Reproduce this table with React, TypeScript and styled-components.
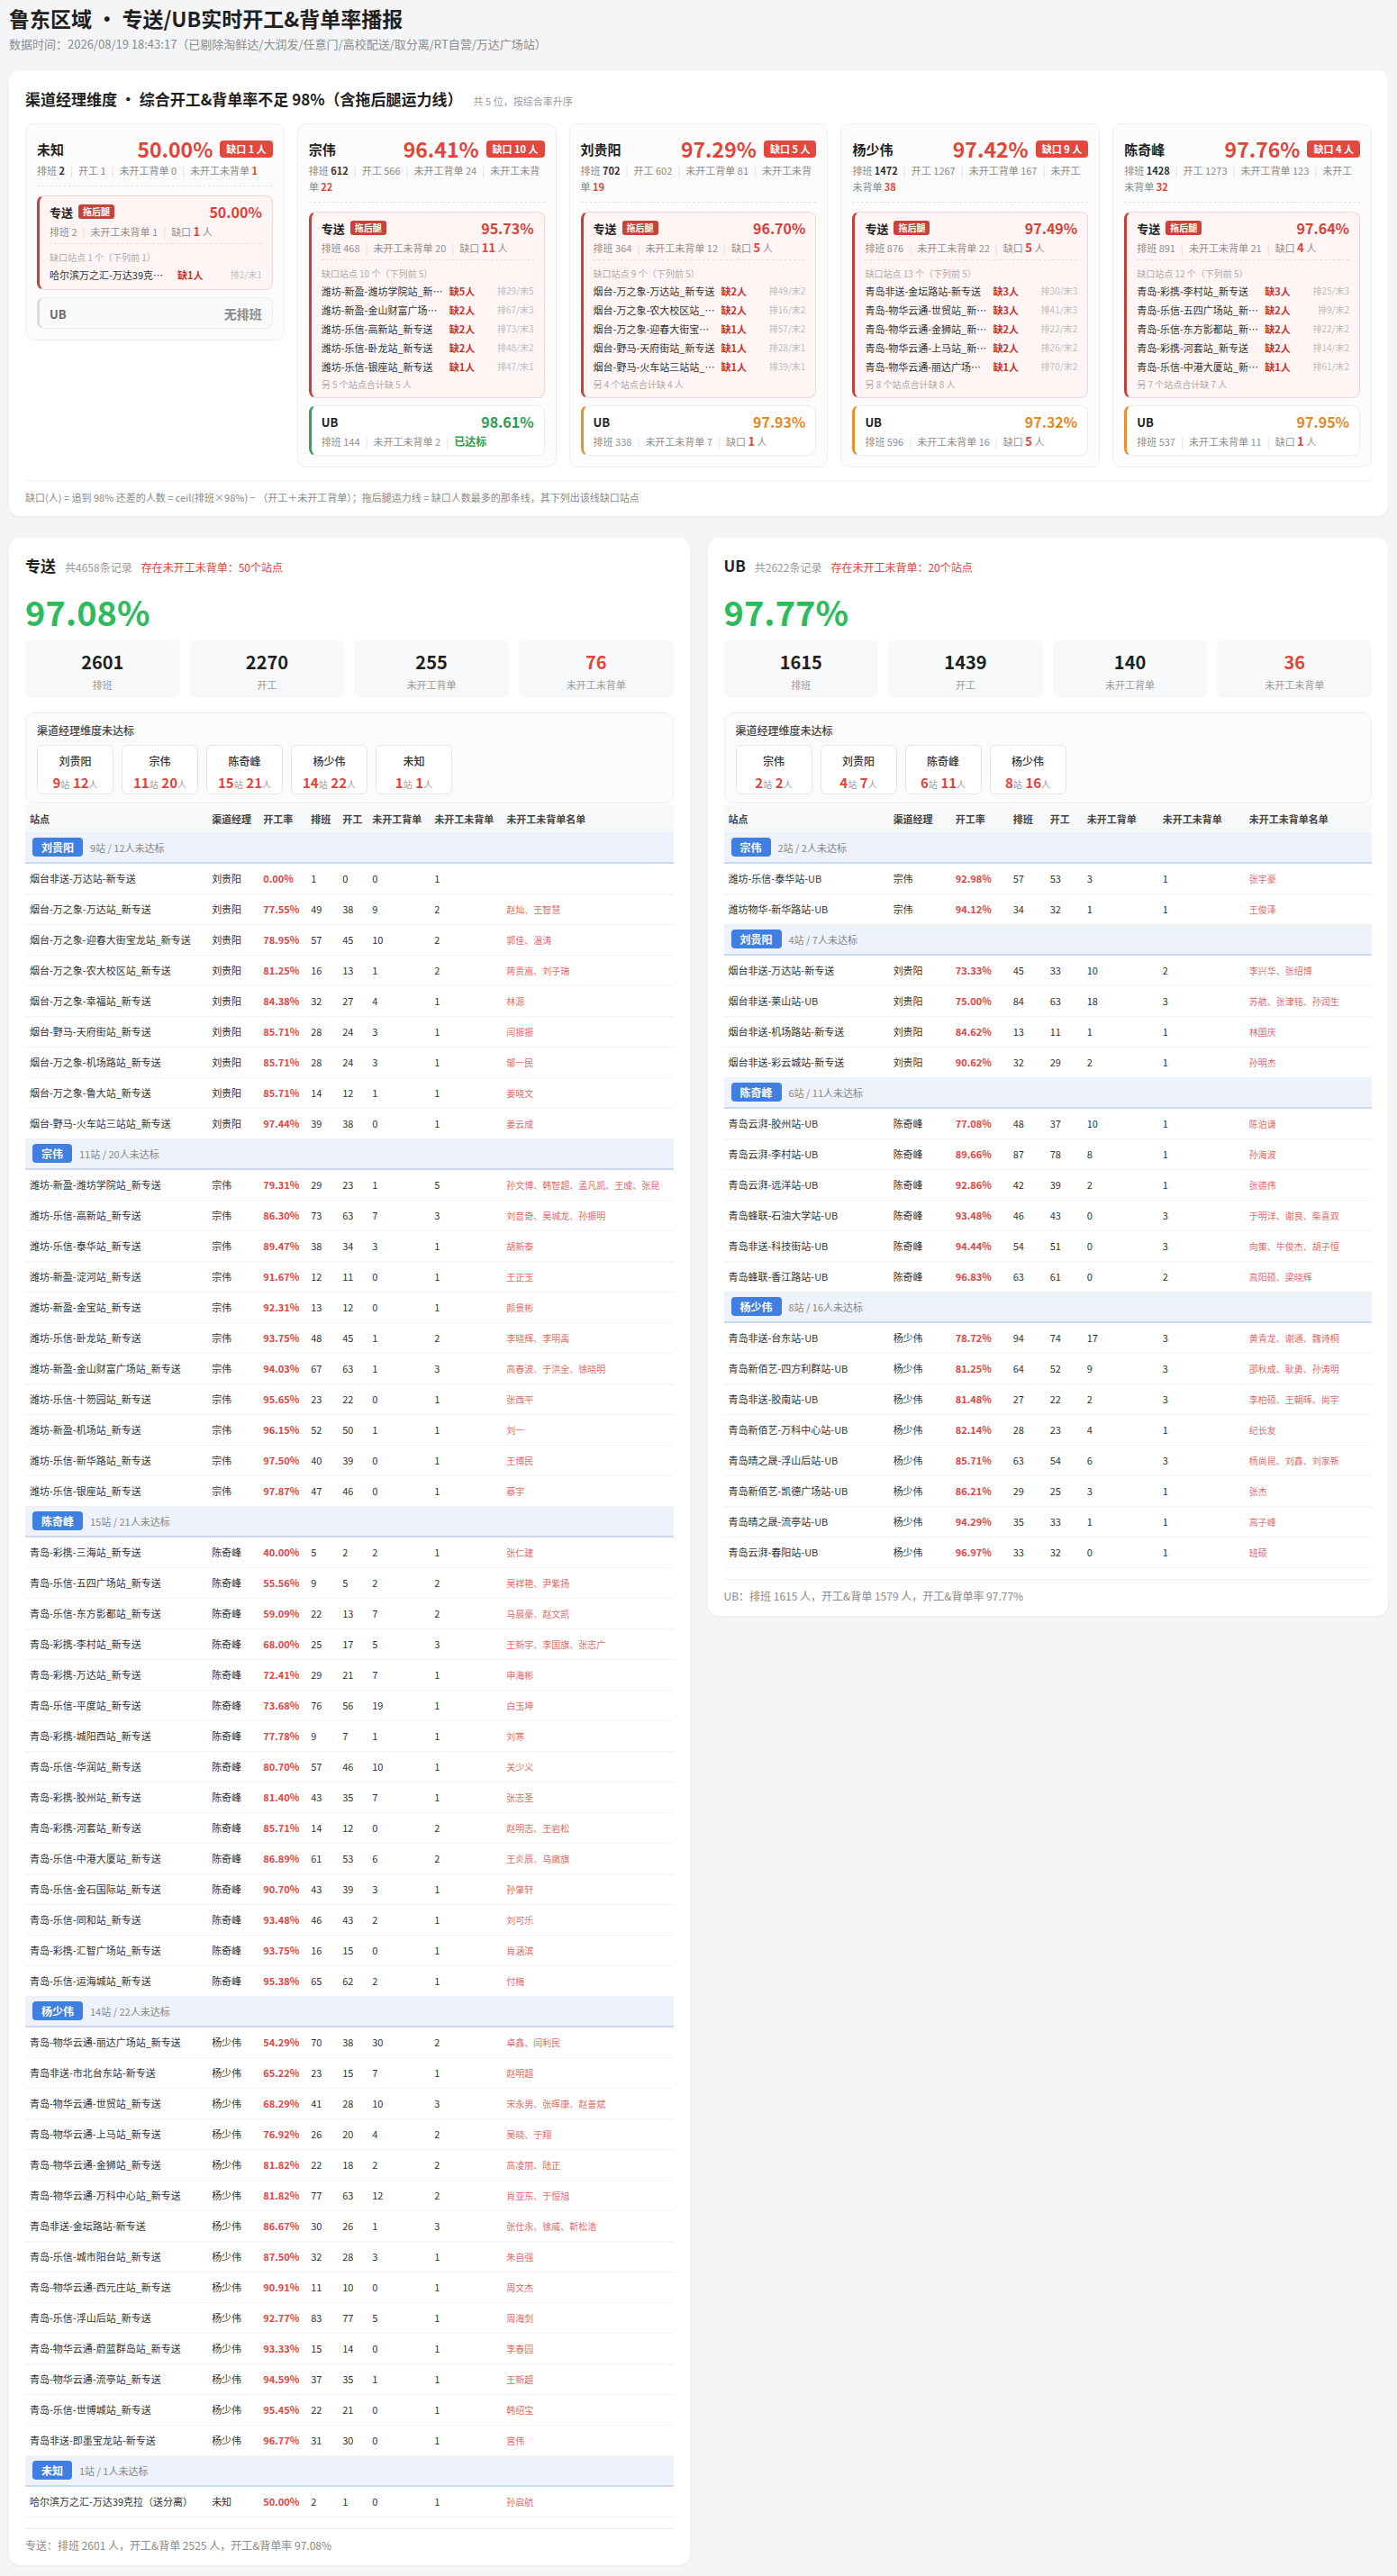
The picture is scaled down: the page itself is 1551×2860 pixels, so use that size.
import React from "react";
import styled, { createGlobalStyle, css } from "styled-components";

type Tone = "drag" | "ok" | "warn" | "none";
type Spot = [string, number, number, number];
type ZsLine = { rate: string; pai: number; wei: number; gap: number; count: number; shown: number; spots: Spot[]; rest?: [number, number] };
type UbLine = { rate: string; pai: number; wei: number; gap: number } | null;
type Manager = { name: string; rate: string; gap: number; pai: number; kai: number; bei: number; wei: number; zs: ZsLine; ub: UbLine };
type Row = [string, string, number, number, number, number, string];
type Group = { mgr: string; summary: string; rows: Row[] };

const GlobalStyle = createGlobalStyle`
  * { box-sizing: border-box; }
  body {
    margin: 0;
    background: #f4f5f7;
    font-family: "Noto Sans CJK SC", "Noto Sans", sans-serif;
    color: #222;
  }
`;

// station names are shown the way the board truncates them
const managers: Manager[] = [
  {
    name: "未知", rate: "50.00%", gap: 1, pai: 2, kai: 1, bei: 0, wei: 1,
    zs: { rate: "50.00%", pai: 2, wei: 1, gap: 1, count: 1, shown: 1, spots: [["哈尔滨万之汇-万达39克…", 1, 2, 1]] },
    ub: null,
  },
  {
    name: "宗伟", rate: "96.41%", gap: 10, pai: 612, kai: 566, bei: 24, wei: 22,
    zs: {
      rate: "95.73%", pai: 468, wei: 20, gap: 11, count: 10, shown: 5, rest: [5, 5],
      spots: [
        ["潍坊-新盈-潍坊学院站_新…", 5, 29, 5],
        ["潍坊-新盈-金山财富广场…", 2, 67, 3],
        ["潍坊-乐信-高新站_新专送", 2, 73, 3],
        ["潍坊-乐信-卧龙站_新专送", 2, 48, 2],
        ["潍坊-乐信-银座站_新专送", 1, 47, 1],
      ],
    },
    ub: { rate: "98.61%", pai: 144, wei: 2, gap: 0 },
  },
  {
    name: "刘贵阳", rate: "97.29%", gap: 5, pai: 702, kai: 602, bei: 81, wei: 19,
    zs: {
      rate: "96.70%", pai: 364, wei: 12, gap: 5, count: 9, shown: 5, rest: [4, 4],
      spots: [
        ["烟台-万之象-万达站_新专送", 2, 49, 2],
        ["烟台-万之象-农大校区站_…", 2, 16, 2],
        ["烟台-万之象-迎春大街宝…", 1, 57, 2],
        ["烟台-野马-天府街站_新专送", 1, 28, 1],
        ["烟台-野马-火车站三站站_…", 1, 39, 1],
      ],
    },
    ub: { rate: "97.93%", pai: 338, wei: 7, gap: 1 },
  },
  {
    name: "杨少伟", rate: "97.42%", gap: 9, pai: 1472, kai: 1267, bei: 167, wei: 38,
    zs: {
      rate: "97.49%", pai: 876, wei: 22, gap: 5, count: 13, shown: 5, rest: [8, 8],
      spots: [
        ["青岛非送-金坛路站-新专送", 3, 30, 3],
        ["青岛-物华云通-世贸站_新…", 3, 41, 3],
        ["青岛-物华云通-金狮站_新…", 2, 22, 2],
        ["青岛-物华云通-上马站_新…", 2, 26, 2],
        ["青岛-物华云通-丽达广场…", 1, 70, 2],
      ],
    },
    ub: { rate: "97.32%", pai: 596, wei: 16, gap: 5 },
  },
  {
    name: "陈奇峰", rate: "97.76%", gap: 4, pai: 1428, kai: 1273, bei: 123, wei: 32,
    zs: {
      rate: "97.64%", pai: 891, wei: 21, gap: 4, count: 12, shown: 5, rest: [7, 7],
      spots: [
        ["青岛-彩携-李村站_新专送", 3, 25, 3],
        ["青岛-乐信-五四广场站_新…", 2, 9, 2],
        ["青岛-乐信-东方影都站_新…", 2, 22, 2],
        ["青岛-彩携-河套站_新专送", 2, 14, 2],
        ["青岛-乐信-中港大厦站_新…", 1, 61, 2],
      ],
    },
    ub: { rate: "97.95%", pai: 537, wei: 11, gap: 1 },
  },
];

const zsGroups: Group[] = [
  {
    mgr: "刘贵阳", summary: "9站 / 12人未达标",
    rows: [
      ["烟台非送-万达站-新专送", "0.00%", 1, 0, 0, 1, ""],
      ["烟台-万之象-万达站_新专送", "77.55%", 49, 38, 9, 2, "赵灿、王智慧"],
      ["烟台-万之象-迎春大街宝龙站_新专送", "78.95%", 57, 45, 10, 2, "郭佳、温涛"],
      ["烟台-万之象-农大校区站_新专送", "81.25%", 16, 13, 1, 2, "蒋贵嵩、刘子瑞"],
      ["烟台-万之象-幸福站_新专送", "84.38%", 32, 27, 4, 1, "林源"],
      ["烟台-野马-天府街站_新专送", "85.71%", 28, 24, 3, 1, "闫振振"],
      ["烟台-万之象-机场路站_新专送", "85.71%", 28, 24, 3, 1, "邹一民"],
      ["烟台-万之象-鲁大站_新专送", "85.71%", 14, 12, 1, 1, "姜晓文"],
      ["烟台-野马-火车站三站站_新专送", "97.44%", 39, 38, 0, 1, "姜云成"],
    ],
  },
  {
    mgr: "宗伟", summary: "11站 / 20人未达标",
    rows: [
      ["潍坊-新盈-潍坊学院站_新专送", "79.31%", 29, 23, 1, 5, "孙文博、韩智超、孟凡凯、王成、张昆"],
      ["潍坊-乐信-高新站_新专送", "86.30%", 73, 63, 7, 3, "刘音奇、吴城龙、孙振明"],
      ["潍坊-乐信-泰华站_新专送", "89.47%", 38, 34, 3, 1, "胡新泰"],
      ["潍坊-新盈-淀河站_新专送", "91.67%", 12, 11, 0, 1, "王正玉"],
      ["潍坊-新盈-金宝站_新专送", "92.31%", 13, 12, 0, 1, "颜景彬"],
      ["潍坊-乐信-卧龙站_新专送", "93.75%", 48, 45, 1, 2, "李晓辉、李明禹"],
      ["潍坊-新盈-金山财富广场站_新专送", "94.03%", 67, 63, 1, 3, "高春波、于洪全、徐晓明"],
      ["潍坊-乐信-十笏园站_新专送", "95.65%", 23, 22, 0, 1, "张西平"],
      ["潍坊-新盈-机场站_新专送", "96.15%", 52, 50, 1, 1, "刘一"],
      ["潍坊-乐信-新华路站_新专送", "97.50%", 40, 39, 0, 1, "王博民"],
      ["潍坊-乐信-银座站_新专送", "97.87%", 47, 46, 0, 1, "蔡宇"],
    ],
  },
  {
    mgr: "陈奇峰", summary: "15站 / 21人未达标",
    rows: [
      ["青岛-彩携-三海站_新专送", "40.00%", 5, 2, 2, 1, "张仁建"],
      ["青岛-乐信-五四广场站_新专送", "55.56%", 9, 5, 2, 2, "吴祥艳、尹紫扬"],
      ["青岛-乐信-东方影都站_新专送", "59.09%", 22, 13, 7, 2, "马晨豪、赵文凯"],
      ["青岛-彩携-李村站_新专送", "68.00%", 25, 17, 5, 3, "王新宇、李国旗、张志广"],
      ["青岛-彩携-万达站_新专送", "72.41%", 29, 21, 7, 1, "申海彬"],
      ["青岛-乐信-平度站_新专送", "73.68%", 76, 56, 19, 1, "白玉坤"],
      ["青岛-彩携-城阳西站_新专送", "77.78%", 9, 7, 1, 1, "刘寒"],
      ["青岛-乐信-华润站_新专送", "80.70%", 57, 46, 10, 1, "关少义"],
      ["青岛-彩携-胶州站_新专送", "81.40%", 43, 35, 7, 1, "张志圣"],
      ["青岛-彩携-河套站_新专送", "85.71%", 14, 12, 0, 2, "赵明志、王岩松"],
      ["青岛-乐信-中港大厦站_新专送", "86.89%", 61, 53, 6, 2, "王炎辰、乌嫩旗"],
      ["青岛-乐信-金石国际站_新专送", "90.70%", 43, 39, 3, 1, "孙肇轩"],
      ["青岛-乐信-同和站_新专送", "93.48%", 46, 43, 2, 1, "刘可乐"],
      ["青岛-彩携-汇智广场站_新专送", "93.75%", 16, 15, 0, 1, "肖涵滨"],
      ["青岛-乐信-运海城站_新专送", "95.38%", 65, 62, 2, 1, "付梅"],
    ],
  },
  {
    mgr: "杨少伟", summary: "14站 / 22人未达标",
    rows: [
      ["青岛-物华云通-丽达广场站_新专送", "54.29%", 70, 38, 30, 2, "卓鑫、闫利民"],
      ["青岛非送-市北台东站-新专送", "65.22%", 23, 15, 7, 1, "赵明超"],
      ["青岛-物华云通-世贸站_新专送", "68.29%", 41, 28, 10, 3, "宋永男、张晖康、赵善斌"],
      ["青岛-物华云通-上马站_新专送", "76.92%", 26, 20, 4, 2, "吴晓、于翔"],
      ["青岛-物华云通-金狮站_新专送", "81.82%", 22, 18, 2, 2, "高凌丽、陆正"],
      ["青岛-物华云通-万科中心站_新专送", "81.82%", 77, 63, 12, 2, "肖亚东、于恒旭"],
      ["青岛非送-金坛路站-新专送", "86.67%", 30, 26, 1, 3, "张仕永、徐威、靳松浩"],
      ["青岛-乐信-城市阳台站_新专送", "87.50%", 32, 28, 3, 1, "朱自强"],
      ["青岛-物华云通-西元庄站_新专送", "90.91%", 11, 10, 0, 1, "周文杰"],
      ["青岛-乐信-浮山后站_新专送", "92.77%", 83, 77, 5, 1, "周海剑"],
      ["青岛-物华云通-蔚蓝群岛站_新专送", "93.33%", 15, 14, 0, 1, "李春园"],
      ["青岛-物华云通-流亭站_新专送", "94.59%", 37, 35, 1, 1, "王新超"],
      ["青岛-乐信-世博城站_新专送", "95.45%", 22, 21, 0, 1, "韩绍宝"],
      ["青岛非送-即墨宝龙站-新专送", "96.77%", 31, 30, 0, 1, "宫伟"],
    ],
  },
  {
    mgr: "未知", summary: "1站 / 1人未达标",
    rows: [["哈尔滨万之汇-万达39克拉（送分离）", "50.00%", 2, 1, 0, 1, "孙启航"]],
  },
];

const ubGroups: Group[] = [
  {
    mgr: "宗伟", summary: "2站 / 2人未达标",
    rows: [
      ["潍坊-乐信-泰华站-UB", "92.98%", 57, 53, 3, 1, "张宇豪"],
      ["潍坊物华-新华路站-UB", "94.12%", 34, 32, 1, 1, "王俊泽"],
    ],
  },
  {
    mgr: "刘贵阳", summary: "4站 / 7人未达标",
    rows: [
      ["烟台非送-万达站-新专送", "73.33%", 45, 33, 10, 2, "李兴华、张绍博"],
      ["烟台非送-莱山站-UB", "75.00%", 84, 63, 18, 3, "苏航、张津铭、孙润生"],
      ["烟台非送-机场路站-新专送", "84.62%", 13, 11, 1, 1, "林国庆"],
      ["烟台非送-彩云城站-新专送", "90.62%", 32, 29, 2, 1, "孙明杰"],
    ],
  },
  {
    mgr: "陈奇峰", summary: "6站 / 11人未达标",
    rows: [
      ["青岛云湃-胶州站-UB", "77.08%", 48, 37, 10, 1, "陈泊谦"],
      ["青岛云湃-李村站-UB", "89.66%", 87, 78, 8, 1, "孙海波"],
      ["青岛云湃-远洋站-UB", "92.86%", 42, 39, 2, 1, "张德伟"],
      ["青岛蜂联-石油大学站-UB", "93.48%", 46, 43, 0, 3, "于明洋、谢良、柴喜双"],
      ["青岛非送-科技街站-UB", "94.44%", 54, 51, 0, 3, "向策、牛俊杰、胡子恒"],
      ["青岛蜂联-香江路站-UB", "96.83%", 63, 61, 0, 2, "高阳硕、梁晓辉"],
    ],
  },
  {
    mgr: "杨少伟", summary: "8站 / 16人未达标",
    rows: [
      ["青岛非送-台东站-UB", "78.72%", 94, 74, 17, 3, "黄青龙、谢通、魏诗桐"],
      ["青岛新佰艺-四方利群站-UB", "81.25%", 64, 52, 9, 3, "邵秋成、耿勇、孙涛明"],
      ["青岛非送-胶南站-UB", "81.48%", 27, 22, 2, 3, "李柏硕、王朝晖、尚宇"],
      ["青岛新佰艺-万科中心站-UB", "82.14%", 28, 23, 4, 1, "纪长友"],
      ["青岛晴之晟-浮山后站-UB", "85.71%", 63, 54, 6, 3, "杨尚昆、刘鑫、刘家新"],
      ["青岛新佰艺-凯德广场站-UB", "86.21%", 29, 25, 3, 1, "张杰"],
      ["青岛晴之晟-流亭站-UB", "94.29%", 35, 33, 1, 1, "高子峰"],
      ["青岛云湃-春阳站-UB", "96.97%", 33, 32, 0, 1, "班硕"],
    ],
  },
];

const RED = "#e0443a";

export default function App() {
  return (
    <>
      <GlobalStyle />
      <Page>
        <Title>鲁东区域 • 专送/UB实时开工&amp;背单率播报</Title>
        <Subtitle>数据时间：2026/08/19 18:43:17（已剔除淘鲜达/大润发/任意门/高校配送/取分离/RT自营/万达广场站）</Subtitle>

        <Panel>
          <PanelHead>
            <PanelTitle>渠道经理维度 • 综合开工&amp;背单率不足 98%（含拖后腿运力线）</PanelTitle>
            <PanelHint>共 5 位，按综合率升序</PanelHint>
          </PanelHead>
          <CardGrid>
            {managers.map((m) => (
              <ManagerCard key={m.name} m={m} />
            ))}
          </CardGrid>
          <Footnote>
            缺口(人) = 追到 98% 还差的人数 = ceil(排班×98%) − （开工＋未开工背单）；拖后腿运力线 = 缺口人数最多的那条线，其下列出该线缺口站点
          </Footnote>
        </Panel>

        <Columns>
          <DetailPanel
            name="专送"
            total="共4658条记录"
            alert="存在未开工未背单：50个站点"
            rate="97.08%"
            stats={[2601, 2270, 255, 76]}
            chips={[["刘贵阳", 9, 12], ["宗伟", 11, 20], ["陈奇峰", 15, 21], ["杨少伟", 14, 22], ["未知", 1, 1]]}
            cols={[202, 57, 53, 35, 33, 69, 80, 190]}
            groups={zsGroups}
            summary="专送：排班 2601 人，开工&背单 2525 人，开工&背单率 97.08%"
          />
          <DetailPanel
            name="UB"
            total="共2622条记录"
            alert="存在未开工未背单：20个站点"
            rate="97.77%"
            stats={[1615, 1439, 140, 36]}
            chips={[["宗伟", 2, 2], ["刘贵阳", 4, 7], ["陈奇峰", 6, 11], ["杨少伟", 8, 16]]}
            cols={[183, 69, 64, 41, 41, 84, 96, 141]}
            groups={ubGroups}
            summary="UB：排班 1615 人，开工&背单 1579 人，开工&背单率 97.77%"
          />
        </Columns>
      </Page>
    </>
  );
}

function Sep() {
  return <Bar>|</Bar>;
}

function ManagerCard({ m }: { m: Manager }) {
  const ub = m.ub;
  const ubTone: Tone = !ub ? "none" : ub.gap === 0 ? "ok" : "warn";
  return (
    <Card>
      <CardHead>
        <CardName>{m.name}</CardName>
        <CardRight>
          <CardRate>{m.rate}</CardRate>
          <GapBadge>缺口 {m.gap} 人</GapBadge>
        </CardRight>
      </CardHead>
      <CardStats>
        排班 <Strong>{m.pai}</Strong>
        <Sep />开工 {m.kai}
        <Sep />未开工背单 {m.bei}
        <Sep />未开工未背单 <Hot>{m.wei}</Hot>
      </CardStats>

      <LineBox $tone="drag">
        <LineHead>
          <LineName>
            专送<DragTag>拖后腿</DragTag>
          </LineName>
          <LineRate $tone="drag">{m.zs.rate}</LineRate>
        </LineHead>
        <LineStats $divided>
          排班 {m.zs.pai}
          <Sep />未开工未背单 {m.zs.wei}
          <Sep />缺口 <GapNum>{m.zs.gap}</GapNum> 人
        </LineStats>
        <SpotHint>
          缺口站点 {m.zs.count} 个（下列前 {m.zs.shown}）
        </SpotHint>
        {m.zs.spots.map((s) => (
          <SpotRow key={s[0]}>
            <SpotName>{s[0]}</SpotName>
            <SpotGap>缺{s[1]}人</SpotGap>
            <SpotMeta>
              排{s[2]}/末{s[3]}
            </SpotMeta>
          </SpotRow>
        ))}
        {m.zs.rest && (
          <SpotRest>
            另 {m.zs.rest[0]} 个站点合计缺 {m.zs.rest[1]} 人
          </SpotRest>
        )}
      </LineBox>

      <LineBox $tone={ubTone}>
        <LineHead>
          <LineName $muted={!ub}>UB</LineName>
          {ub ? <LineRate $tone={ubTone}>{ub.rate}</LineRate> : <NoShift>无排班</NoShift>}
        </LineHead>
        {ub && (
          <LineStats>
            排班 {ub.pai}
            <Sep />未开工未背单 {ub.wei}
            <Sep />
            {ub.gap === 0 ? (
              <Reached>已达标</Reached>
            ) : (
              <>
                缺口 <GapNum>{ub.gap}</GapNum> 人
              </>
            )}
          </LineStats>
        )}
      </LineBox>
    </Card>
  );
}

type DetailProps = {
  name: string;
  total: string;
  alert: string;
  rate: string;
  stats: number[];
  chips: [string, number, number][];
  cols: number[];
  groups: Group[];
  summary: string;
};

const statLabels = ["排班", "开工", "未开工背单", "未开工未背单"];
const heads = ["站点", "渠道经理", "开工率", "排班", "开工", "未开工背单", "未开工未背单", "未开工未背单名单"];

function DetailPanel(p: DetailProps) {
  return (
    <Section>
      <SectionHead>
        <SectionName>{p.name}</SectionName>
        <Muted>{p.total}</Muted>
        <Alert>{p.alert}</Alert>
      </SectionHead>
      <BigRate>{p.rate}</BigRate>
      <StatRow>
        {p.stats.map((v, i) => (
          <StatBox key={statLabels[i]}>
            <StatNum $red={i === 3}>{v}</StatNum>
            <StatLabel>{statLabels[i]}</StatLabel>
          </StatBox>
        ))}
      </StatRow>
      <MgrBox>
        <MgrTitle>渠道经理维度未达标</MgrTitle>
        <ChipRow>
          {p.chips.map(([n, s, r]) => (
            <MgrChip key={n}>
              <ChipName>{n}</ChipName>
              <ChipNums>
                <ChipNum>{s}</ChipNum>
                <ChipUnit>站</ChipUnit> <ChipNum>{r}</ChipNum>
                <ChipUnit>人</ChipUnit>
              </ChipNums>
            </MgrChip>
          ))}
        </ChipRow>
      </MgrBox>
      <Table>
        <colgroup>
          {p.cols.map((w, i) => (
            <col key={i} style={{ width: w }} />
          ))}
        </colgroup>
        <thead>
          <tr>
            {heads.map((h) => (
              <Th key={h}>{h}</Th>
            ))}
          </tr>
        </thead>
        <tbody>
          {p.groups.map((g) => (
            <React.Fragment key={g.mgr}>
              <tr>
                <GroupCell colSpan={8}>
                  <GroupTag>{g.mgr}</GroupTag>
                  <GroupText>{g.summary}</GroupText>
                </GroupCell>
              </tr>
              {g.rows.map((r) => (
                <tr key={r[0]}>
                  <Td>{r[0]}</Td>
                  <Td>{g.mgr}</Td>
                  <RateTd>{r[1]}</RateTd>
                  <Td>{r[2]}</Td>
                  <Td>{r[3]}</Td>
                  <Td>{r[4]}</Td>
                  <Td>{r[5]}</Td>
                  <NameTd>{r[6]}</NameTd>
                </tr>
              ))}
            </React.Fragment>
          ))}
        </tbody>
      </Table>
      <Summary>{p.summary}</Summary>
    </Section>
  );
}

/* ---------- page ---------- */

const Page = styled.div`
  padding: 6px 10px 11px;
`;

const Title = styled.h1`
  margin: 0;
  font-size: 23px;
  line-height: 28px;
  font-weight: 700;
  color: #1f1f1f;
`;

const Subtitle = styled.div`
  margin-top: 6px;
  font-size: 13px;
  line-height: 18px;
  color: #8c8c8c;
`;

const Panel = styled.div`
  margin-top: 20px;
  background: #fff;
  border-radius: 12px;
  box-shadow: 0 1px 3px rgba(0, 0, 0, 0.06);
  padding: 20px 18px 12px;
`;

const PanelHead = styled.div`
  display: flex;
  align-items: baseline;
  gap: 12px;
`;

const PanelTitle = styled.div`
  font-size: 17px;
  line-height: 24px;
  font-weight: 700;
  color: #1f1f1f;
`;

const PanelHint = styled.div`
  font-size: 11px;
  color: #9a9a9a;
`;

const CardGrid = styled.div`
  margin-top: 15px;
  display: grid;
  grid-template-columns: repeat(5, 1fr);
  gap: 14px;
  align-items: start;
`;

const Card = styled.div`
  background: #fcfcfc;
  border: 1px solid #eeeeee;
  border-radius: 10px;
  padding: 12px;
`;

const CardHead = styled.div`
  display: flex;
  align-items: center;
  justify-content: space-between;
  height: 30px;
`;

const CardName = styled.div`
  font-size: 15px;
  font-weight: 700;
  color: #1f1f1f;
`;

const CardRight = styled.div`
  display: flex;
  align-items: center;
  gap: 8px;
`;

const CardRate = styled.div`
  font-size: 23px;
  font-weight: 700;
  color: ${RED};
  line-height: 30px;
`;

const GapBadge = styled.span`
  display: inline-flex;
  align-items: center;
  height: 19px;
  padding: 0 7px;
  border-radius: 4px;
  background: #e2483e;
  color: #fff;
  font-size: 11px;
  font-weight: 700;
`;

const CardStats = styled.div`
  font-size: 11px;
  line-height: 18px;
  color: #8a8a8a;
  padding-bottom: 8px;
  border-bottom: 1px dashed #e4e4e4;
  margin-bottom: 10px;
`;

const Bar = styled.span`
  color: #dcdcdc;
  margin: 0 6px;
`;

const Strong = styled.b`
  color: #333;
  font-weight: 700;
`;

const Hot = styled.b`
  color: ${RED};
  font-weight: 700;
`;

const toneStyles: Record<Tone, ReturnType<typeof css>> = {
  drag: css`
    background: #fff5f5;
    border-color: #f3d5d5;
    border-left-color: #c6413a;
  `,
  ok: css`
    background: #fff;
    border-color: #ececec;
    border-left-color: #2ea65a;
  `,
  warn: css`
    background: #fff;
    border-color: #ececec;
    border-left-color: #e8912c;
  `,
  none: css`
    background: #fafafa;
    border-color: #ececec;
    border-left-color: #d9dcdf;
  `,
};

const LineBox = styled.div<{ $tone: Tone }>`
  border: 1px solid;
  border-left-width: 3px;
  border-radius: 8px;
  padding: 7px 11px 6px;
  ${(p) => toneStyles[p.$tone]}

  & + & {
    margin-top: 8px;
  }
`;

const LineHead = styled.div`
  display: flex;
  align-items: center;
  justify-content: space-between;
  height: 20px;
`;

const LineName = styled.div<{ $muted?: boolean }>`
  display: flex;
  align-items: center;
  gap: 6px;
  font-size: 13px;
  font-weight: 700;
  color: ${(p) => (p.$muted ? "#6b6b6b" : "#222")};
`;

const DragTag = styled.span`
  padding: 0 5px;
  line-height: 16px;
  border-radius: 3px;
  background: #c9423b;
  color: #fff;
  font-size: 10px;
  font-weight: 700;
`;

const lineRateColor: Record<Tone, string> = {
  drag: "#d4423a",
  ok: "#2a9d50",
  warn: "#e2891f",
  none: "#888",
};

const LineRate = styled.div<{ $tone: Tone }>`
  font-size: 16px;
  font-weight: 700;
  color: ${(p) => lineRateColor[p.$tone]};
`;

const NoShift = styled.div`
  font-size: 14px;
  font-weight: 700;
  color: #8a8a8a;
`;

const LineStats = styled.div<{ $divided?: boolean }>`
  margin-top: 3px;
  font-size: 11px;
  line-height: 18px;
  color: #8f8f8f;
  ${(p) =>
    p.$divided &&
    css`
      padding-bottom: 4px;
      border-bottom: 1px dashed #efdada;
    `}
`;

const GapNum = styled.b`
  color: ${RED};
  font-size: 13px;
  font-weight: 700;
`;

const Reached = styled.b`
  color: #2a9d50;
  font-size: 12px;
  font-weight: 700;
`;

const SpotHint = styled.div`
  margin-top: 7px;
  font-size: 10px;
  line-height: 16px;
  color: #ababab;
`;

const SpotRow = styled.div`
  display: grid;
  grid-template-columns: 138px 1fr auto;
  column-gap: 4px;
  align-items: center;
  height: 21px;

  &:first-of-type {
    margin-top: 3px;
  }
`;

const SpotName = styled.div`
  font-size: 11px;
  color: #333;
  white-space: nowrap;
`;

const SpotGap = styled.div`
  font-size: 11px;
  font-weight: 700;
  color: #c9352d;
`;

const SpotMeta = styled.div`
  font-size: 10px;
  color: #bdbdbd;
  text-align: right;
`;

const SpotRest = styled.div`
  margin-top: 2px;
  font-size: 10px;
  line-height: 16px;
  color: #ababab;
`;

const Footnote = styled.div`
  margin-top: 14px;
  border-top: 1px solid #eeeeee;
  padding-top: 9px;
  font-size: 11px;
  line-height: 18px;
  color: #8a8a8a;
`;

/* ---------- detail sections ---------- */

const Columns = styled.div`
  margin-top: 24px;
  display: grid;
  grid-template-columns: 1fr 1fr;
  gap: 20px;
  align-items: start;
`;

const Section = styled.div`
  background: #fff;
  border-radius: 12px;
  box-shadow: 0 1px 3px rgba(0, 0, 0, 0.06);
  padding: 20px 18px 13px;
`;

const SectionHead = styled.div`
  display: flex;
  align-items: baseline;
  gap: 10px;
  line-height: 22px;
`;

const SectionName = styled.div`
  font-size: 17px;
  font-weight: 700;
  color: #1f1f1f;
`;

const Muted = styled.span`
  font-size: 12px;
  color: #9a9a9a;
`;

const Alert = styled.span`
  font-size: 12px;
  color: ${RED};
`;

const BigRate = styled.div`
  margin-top: 16px;
  font-size: 38px;
  line-height: 44px;
  font-weight: 700;
  color: #2dbb5d;
`;

const StatRow = styled.div`
  margin-top: 9px;
  display: grid;
  grid-template-columns: repeat(4, 1fr);
  gap: 11px;
`;

const StatBox = styled.div`
  background: #f7f8fa;
  border-radius: 8px;
  padding: 11px 0 7px;
  text-align: center;
`;

const StatNum = styled.div<{ $red?: boolean }>`
  font-size: 20px;
  line-height: 28px;
  font-weight: 700;
  color: ${(p) => (p.$red ? RED : "#1f1f1f")};
`;

const StatLabel = styled.div`
  margin-top: 3px;
  font-size: 11px;
  line-height: 16px;
  color: #9a9a9a;
`;

const MgrBox = styled.div`
  margin-top: 16px;
  border: 1px solid #eeeeee;
  border-radius: 10px;
  background: #fbfbfc;
  padding: 11px 12px 9px;
`;

const MgrTitle = styled.div`
  font-size: 12px;
  line-height: 16px;
  font-weight: 500;
  color: #444;
`;

const ChipRow = styled.div`
  margin-top: 8px;
  display: flex;
  gap: 9px;
`;

const MgrChip = styled.div`
  min-width: 85px;
  height: 55px;
  padding: 7px 10px 0;
  background: #fff;
  border: 1px solid #e6e6e6;
  border-radius: 6px;
  text-align: center;
`;

const ChipName = styled.div`
  font-size: 12px;
  line-height: 20px;
  font-weight: 500;
  color: #333;
`;

const ChipNums = styled.div`
  margin-top: 2px;
  line-height: 22px;
  white-space: nowrap;
`;

const ChipNum = styled.span`
  font-size: 15px;
  font-weight: 700;
  color: ${RED};
`;

const ChipUnit = styled.span`
  font-size: 10px;
  color: #9a9a9a;
`;

const Table = styled.table`
  margin-top: 1px;
  width: 100%;
  table-layout: fixed;
  border-collapse: collapse;
  font-size: 11px;
`;

const Th = styled.th`
  height: 31px;
  padding: 0 5px;
  background: #f7f8fa;
  text-align: left;
  font-weight: 600;
  color: #444;
  white-space: nowrap;
`;

const GroupCell = styled.td`
  height: 34px;
  padding: 0 8px;
  background: #edf2fc;
  border-bottom: 2px solid #cad9f3;
`;

const GroupTag = styled.span`
  display: inline-block;
  padding: 0 10px;
  line-height: 21px;
  border-radius: 4px;
  background: #3f7fe2;
  color: #fff;
  font-size: 12px;
  font-weight: 700;
  vertical-align: middle;
`;

const GroupText = styled.span`
  margin-left: 8px;
  font-size: 11px;
  color: #888;
  vertical-align: middle;
`;

const Td = styled.td`
  height: 34px;
  padding: 0 5px;
  border-bottom: 1px solid #f1f1f1;
  color: #333;
  white-space: nowrap;
`;

const RateTd = styled(Td)`
  color: #e04545;
  font-weight: 600;
`;

const NameTd = styled(Td)`
  font-size: 10px;
  color: #e26a6a;
`;

const Summary = styled.div`
  margin-top: 12px;
  border-top: 1px solid #eeeeee;
  padding-top: 9px;
  font-size: 12px;
  line-height: 18px;
  color: #8a8a8a;
`;
